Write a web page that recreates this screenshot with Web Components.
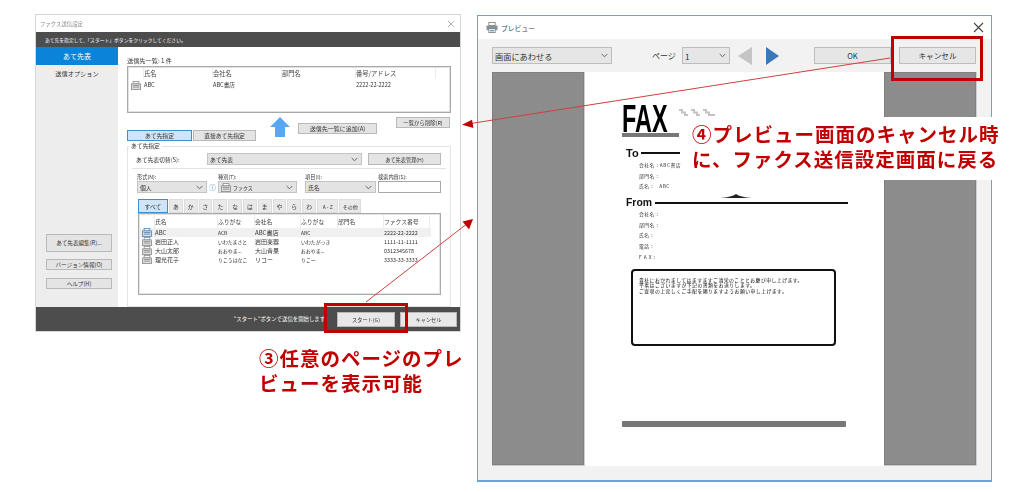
<!DOCTYPE html>
<html lang="ja"><head><meta charset="utf-8"><title>FAX</title>
<style>
html,body{margin:0;padding:0;background:#fff;width:1024px;height:492px;overflow:hidden;font-family:"Noto Sans CJK JP","Noto Sans",sans-serif}
</style></head><body>
<fax-window></fax-window>
<preview-window></preview-window>
<note-layer></note-layer>
<script>
const FF='"Noto Sans CJK JP","Noto Sans",sans-serif';
const faxIcon=(c='#8d8d8d')=>`<svg width="10" height="9" viewBox="0 0 12 11"><rect x="2.5" y="0.5" width="7" height="3" fill="#fff" stroke="${c}"/><rect x="0.5" y="3.5" width="11" height="7" fill="#ddd" stroke="${c}"/><path d="M2 5.5h8M2 7.5h8" stroke="${c}"/></svg>`;
function def(name,css,html,init){
  customElements.define(name,class extends HTMLElement{
    constructor(){super();const s=this.attachShadow({mode:'open'});
      s.innerHTML=`<style>${css}</style>`+(typeof html==='function'?html(this):html);}
    connectedCallback(){
      if(typeof html==='function'){const st=this.shadowRoot.querySelector('style').outerHTML;this.shadowRoot.innerHTML=st+html(this);}
      if(init)init(this);}
  });
}
def('win-btn',`:host{display:flex;align-items:center;justify-content:center;box-sizing:border-box;background:#e4e4e4;border:1px solid #b9b9b9;font-size:5.8px;color:#333;white-space:nowrap;overflow:hidden}
:host([active]){background:#cfe5f7;border-color:#3e8fd0}`,`<slot></slot>`);
def('win-select',`:host{display:flex;align-items:center;box-sizing:border-box;background:#e3e3e3;border:1px solid #c4c4c4;font-size:5.8px;color:#333;padding:0 3px 0 2px;white-space:nowrap;gap:2px}
.t{flex:1;display:flex;align-items:center;gap:2px}svg{flex:none}`,`<span class="t"><slot></slot></span><svg width="7" height="5" viewBox="0 0 7 5"><path d="M.7 1l2.8 2.8L6.3 1" fill="none" stroke="#666"/></svg>`);
def('head-cells',`:host{display:grid;font-size:6.3px;color:#444;background:#fff;align-items:center}
::slotted(span){border-right:1px solid #ececec;height:100%;display:flex;align-items:center;box-sizing:border-box;white-space:nowrap}`,`<slot></slot>`);
def('fax-icon',`:host{display:inline-flex;align-items:center}`,el=>faxIcon(el.getAttribute('color')||'#8d8d8d'));

def('fax-window',`
:host{position:absolute;left:36px;top:15px;width:424px;height:316px;box-sizing:border-box;background:#fff;display:flex;flex-direction:column;font-family:${FF};box-shadow:0 0 0 1px #d6d6d6;filter:blur(.35px);color:#333}
.title{height:17px;display:flex;align-items:center;justify-content:space-between;padding:0 5px 0 4px;font-size:5.4px;color:#8a8a8a}
.title svg{display:block}
.msg{height:15px;background:#4d4d4d;color:#fff;font-size:4.8px;display:flex;align-items:center;padding-left:9px;white-space:nowrap}
.body{flex:1;display:flex;min-height:0}
.side{width:82px;background:#ededed;display:flex;flex-direction:column;flex:none}
.tab{height:17px;display:flex;align-items:center;justify-content:center;font-size:6.2px}
.tab.on{height:18px;background:#0a84d8;color:#fff;font-size:7px}
.side .gap{flex:1}
.sbtns{display:flex;flex-direction:column;padding:0 6px 18px 10px}
.sbtns win-btn{height:11px;margin-bottom:8px;font-size:5.6px}
.sbtns win-btn:first-child{height:18px;margin-bottom:7px;font-size:5.6px}
.sbtns win-btn:last-child{margin-bottom:0}
.main{flex:1;padding:0 9px;min-width:0;display:flex;flex-direction:column}
.cap{height:19px;display:flex;align-items:flex-end;padding-bottom:1px;box-sizing:border-box;font-size:6.2px}
.sent{height:47px;box-sizing:border-box;border:1px solid #a9a9a9;box-shadow:inset 0 0 0 1px #e2e2e2;padding:1px}
.sent head-cells{height:11px;grid-template-columns:15px 69px 69px 74px 80px}
.sent .row{display:grid;grid-template-columns:15px 69px 69px 74px 80px;height:10px;font-size:5.6px;align-items:center;margin-top:1px}
.sent .row fax-icon{padding-left:2px}
.act{display:grid;grid-template-columns:65px 64px 20px 79px 54px;column-gap:0;height:28px}
.act>*{box-sizing:border-box}
.t1{margin-top:17px;height:11px}.t2{margin:17px 0 0 1px;height:11px}
.up{margin:4px 0 0 14px;width:20px;height:20px;grid-column:3}
.ab1{grid-column:4;margin:10px 0 7px 22px;width:79px;height:11px;font-size:6px}
.ab2{grid-column:5;margin:4px 0 0 41px;width:54px;height:11px;font-size:5.4px}
.group{margin:1px 0 0;padding:0;flex:1;border:1px solid #e3e3e3;min-width:0;position:relative}
legend{font-size:5.8px;padding:0 2px;margin-left:1px;line-height:8px}
.r1{display:flex;align-items:center;height:12px;margin:3px 0 0 8px}
.r1 label{width:71px;font-size:5.8px}
.r1 win-select{width:155px;height:12px}
.r1 win-btn{width:73px;height:12px;margin-left:6px;font-size:5.2px}
.hr{height:1px;background:#e3e3e3;margin:3px 4px 0 4px}
.r2{display:grid;grid-template-columns:70px 11px 79px 8px 71px 2px 63px;margin:2px 0 0 9px;grid-template-rows:10px 12px;font-size:5.2px}
.r2 span{align-self:center;white-space:nowrap}
.r2 win-select.k{font-size:5px}
.info{color:#3a8bd0;font-size:7px;align-self:center;justify-self:center}
.in{background:#fff;border:1px solid #a8a8a8;box-sizing:border-box}
.kana{display:flex;margin:6px 0 0 10px;height:14px;gap:1px}
.kana win-btn{width:13.8px;font-size:5.8px;background:#e9e9e9;border-color:#dcdcdc}
.kana win-btn[active]{width:30px;background:#cfe5f7;border-color:#3e8fd0}
.kana .w{width:21.5px;font-size:5px}
.list{margin:0 0 0 10px;width:303px;height:82px;box-sizing:border-box;border:1px solid #a9a9a9;box-shadow:inset 0 0 0 1px #e4e4e4;padding:1px 1px}
.list head-cells{height:13px;grid-template-columns:15px 63px 37px 46px 37px 46px 46px;font-size:5.8px}
.list .row{display:grid;grid-template-columns:15px 63px 37px 46px 37px 46px 46px;height:9px;font-size:6px;align-items:center;white-space:nowrap;overflow:hidden;width:291px}
.list .row span:nth-child(3),.list .row span:nth-child(5){font-size:4.9px}
.list .row span:nth-child(7){font-size:5.4px}
.row.sel{background:#f0f0f0}
.list .row fax-icon{padding-left:2px}
.foot{height:24px;background:#4d4d4d;display:flex;align-items:center;justify-content:flex-end;color:#fff;font-size:5.4px;padding-right:3px;white-space:nowrap}
.foot win-btn{height:15px;width:58px;margin-left:5px;background:#e8e8e8;font-size:5.2px}
.foot win-btn:last-child{width:57px}
.foot span{margin-right:2px}
`,`
<div class="title"><span>ファクス送信設定</span><svg width="8" height="8" viewBox="0 0 8 8"><path d="M1 1l6 6M7 1L1 7" stroke="#b5b5b5"/></svg></div>
<div class="msg">あて先を指定して、「スタート」ボタンをクリックしてください。</div>
<div class="body">
 <div class="side">
  <div class="tab on">あて先表</div><div class="tab">送信オプション</div><div class="gap"></div>
  <div class="sbtns"><win-btn>あて先表編集(R)...</win-btn><win-btn>バージョン情報(O)</win-btn><win-btn>ヘルプ(H)</win-btn></div>
 </div>
 <div class="main">
  <div class="cap">送信先一覧: 1 件</div>
  <div class="sent">
   <head-cells><span></span><span>氏名</span><span>会社名</span><span>部門名</span><span>番号/アドレス</span></head-cells>
   <div class="row"><fax-icon></fax-icon><span>ABC</span><span>ABC書店</span><span></span><span>2222-22-2222</span></div>
  </div>
  <div class="act">
   <win-btn class="t1" active>あて先指定</win-btn><win-btn class="t2">直接あて先指定</win-btn>
   <svg class="up" viewBox="0 0 20 20"><path d="M10 0L20 10H15V20H5V10H0Z" fill="#59a7f1"/></svg>
   <win-btn class="ab1">送信先一覧に追加(A)</win-btn><win-btn class="ab2">一覧から削除(R)</win-btn>
  </div>
  <fieldset class="group"><legend>あて先指定</legend>
   <div class="r1"><label>あて先表切替(S):</label><win-select>あて先表</win-select><win-btn>あて先表管理(H)</win-btn></div>
   <div class="hr"></div>
   <div class="r2">
    <span>形式(N):</span><i></i><span>種別(T):</span><i></i><span>項目(I):</span><i></i><span>検索内容(S):</span>
    <win-select>個人</win-select><span class="info">ⓘ</span><win-select class="k"><fax-icon></fax-icon>ファクス</win-select><i></i><win-select>氏名</win-select><i></i><div class="in"></div>
   </div>
   <div class="kana"><win-btn active>すべて</win-btn><win-btn>あ</win-btn><win-btn>か</win-btn><win-btn>さ</win-btn><win-btn>た</win-btn><win-btn>な</win-btn><win-btn>は</win-btn><win-btn>ま</win-btn><win-btn>や</win-btn><win-btn>ら</win-btn><win-btn>わ</win-btn><win-btn class="w">A - Z</win-btn><win-btn class="w">その他</win-btn></div>
   <div class="list">
    <head-cells><span></span><span>氏名</span><span>ふりがな</span><span>会社名</span><span>ふりがな</span><span>部門名</span><span>ファクス番号</span></head-cells>
    <div class="row sel"><fax-icon color="#5b84a8"></fax-icon><span>ABC</span><span>ACB</span><span>ABC書店</span><span>ABC</span><span></span><span>2222-22-2222</span></div>
    <div class="row"><fax-icon></fax-icon><span>岩田正人</span><span>いわたまさと</span><span>岩田楽器</span><span>いわたがっき</span><span></span><span>1111-11-1111</span></div>
    <div class="row"><fax-icon></fax-icon><span>大山太郎</span><span>おおやま...</span><span>大山青果</span><span>おおやま...</span><span></span><span>0312345678</span></div>
    <div class="row"><fax-icon></fax-icon><span>理光花子</span><span>りこうはなこ</span><span>リコー</span><span>りこー</span><span></span><span>3333-33-3333</span></div>
   </div>
  </fieldset>
 </div>
</div>
<div class="foot"><span>"スタート"ボタンで送信を開始します。</span><win-btn>スタート(G)</win-btn><win-btn>キャンセル</win-btn></div>
`);

def('fax-sheet',`
:host{display:block;width:299px;background:#fff;box-sizing:border-box;padding:33px 37px 0;color:#111;font-family:${FF};filter:blur(.25px)}
.top{display:flex;height:28px;align-items:flex-start}
.fax{font:bold 39px/28px "Liberation Sans",sans-serif;transform:scaleX(.6);transform-origin:0 50%;width:56px;color:#000;letter-spacing:0}
.bar{width:57px;height:4px;background:#777}
.hd{display:flex;align-items:center;font:bold 11px/12px "Liberation Sans",sans-serif;margin-left:4px;color:#111}
.hd i{height:2px;background:#111;flex:none;margin-left:2px}
.to{margin-top:10px}.to i{width:39px}
.from{margin-top:6px;position:relative;font-size:10.4px}.from i{width:193px;margin-left:3px}
.rows{margin-left:17px;font-size:4.8px;letter-spacing:.5px;color:#333}
.rows div{height:10.7px;display:flex;align-items:center;white-space:pre}
.box{box-sizing:border-box;margin:7px 0 0 9px;width:205px;height:77px;border:2px solid #111;border-radius:4px;padding:6px 6px;font-size:4.9px;line-height:5.5px;letter-spacing:.42px;color:#111;white-space:nowrap}
.foot{width:224px;height:6px;background:#777;margin-top:75px;border-radius:1px}
.bump{position:absolute;left:94px;top:-3px}
`,`
<div class="top"><span class="fax">FAX</span><svg width="38" height="11" viewBox="0 0 38 11" style="margin-top:3px"><g fill="none" stroke="#c4c4c4" stroke-width="2"><path d="M1 2h3v2.500h3V7h3"/><path d="M13 2h3v2.500h3V7h3"/><path d="M25 2h3v2.500h3V7h6"/></g></svg></div>
<div class="bar"></div>
<div class="hd to">To<i></i></div>
<div class="rows"><div>会社名 : ABC書店</div><div>部門名 :</div><div>氏名 :    ABC</div></div>
<div class="hd from">From<i></i><svg class="bump" width="32" height="4" viewBox="0 0 32 4"><path d="M0 4Q12 3 16 0Q20 3 32 4Z" fill="#222"/></svg></div>
<div class="rows" style="margin-top:-1px"><div>会社名 :</div><div>部門名 :</div><div>氏名 :</div><div>電話 :</div><div>F A X :</div></div>
<div class="box">貴社におかれましてはますますご清栄のこととお慶び申し上げます。<br>平素はございますが下記の書類をお送りします。<br>ご査収の上宜しくご手配を賜りますようお願い申し上げます。</div>
<div class="foot"></div>
`);

def('preview-window',`
:host{position:absolute;left:477px;top:15px;width:515px;height:467px;box-sizing:border-box;border:1px solid #64a5de;border-width:1px 1px 2px 1px;background:#f2f2f2;display:flex;flex-direction:column;font-family:${FF};color:#333}
.title{height:23px;flex:none;background:#fff;display:flex;align-items:center;padding:0 7px 0 8px;font-size:6.8px;gap:3px;color:#444}
.title .sp{flex:1}
.tool{height:33px;flex:none;display:flex;align-items:center;padding:0 14px;font-size:8px}
.tool win-select{height:17px;font-size:8.2px;box-sizing:border-box;background:#e6e6e6;border-color:#bdbdbd}
.tool win-btn{height:17px;width:77px;font-size:7.6px;background:#e6e6e6;border-color:#bdbdbd}
.pg{margin:0 6px 0 40px;width:24px;white-space:nowrap}
.wrap{flex:none;height:394px;display:flex;margin:0 14px}
.gray{flex:1;background:#8c8c8c;border-right:1px solid #cfcfcf;border-bottom:1px solid #c9c9c9;box-shadow:inset 0 0 0 1px #808080}
.tri{display:block}
`,`
<div class="title"><svg width="12" height="11" viewBox="0 0 15 14"><rect x="3.5" y=".5" width="8" height="4" fill="#fff" stroke="#777"/><rect x=".5" y="4.500" width="14" height="6" rx="1" fill="#8c9196"/><rect x="3.5" y="8.500" width="8" height="5" fill="#fff" stroke="#777"/><rect x="5" y="10" width="5" height="2" fill="#5aa7d8"/></svg><span>プレビュー</span><span class="sp"></span><svg width="11" height="11" viewBox="0 0 11 11"><path d="M1 1l9 9M10 1l-9 9" stroke="#444" stroke-width="1.1"/></svg></div>
<div class="tool">
 <win-select style="width:120px">画面にあわせる</win-select>
 <span class="pg">ページ</span>
 <win-select style="width:48px">1</win-select>
 <svg class="tri" style="margin-left:8px" width="14" height="18" viewBox="0 0 14 18"><path d="M14 0V18L0 9Z" fill="#c4c4c4"/></svg>
 <svg class="tri" style="margin-left:14px" width="13" height="18" viewBox="0 0 13 18"><path d="M0 0V18L13 9Z" fill="#3a78b8"/></svg>
 <win-btn style="margin-left:35px">OK</win-btn>
 <win-btn style="margin-left:8px">キャンセル</win-btn>
</div>
<div class="wrap"><div class="gray"></div><fax-sheet></fax-sheet><div class="gray"></div></div>
`);

def('note-layer',`
:host{position:absolute;left:0;top:0;width:1024px;height:492px;font-family:${FF};pointer-events:none}
.cover{position:absolute;left:688px;top:117px;width:336px;height:63px;background:#fff}
svg{position:absolute;left:0;top:0}
.note{position:absolute;color:#c00000;font-weight:700;font-size:19.5px;line-height:25px;letter-spacing:1px;white-space:nowrap}
.n3{left:259px;top:345px}.n4{left:692px;top:121px}
`,`
<div class="cover"></div>
<svg width="1024" height="492" viewBox="0 0 1024 492">
 <g fill="none" stroke="#c00000">
  <rect x="325.5" y="304.5" width="81" height="27" stroke-width="3"/>
  <rect x="892.5" y="37.5" width="89" height="42" stroke-width="3"/>
  <path d="M890 58L470 123.6" stroke-width="1" stroke="#d04040"/>
  <path d="M366 302L466 224.5" stroke-width="1" stroke="#d04040"/>
 </g>
 <path d="M462 124.8L472 119.7L473.5 128Z" fill="#c00000"/>
 <path d="M473 219L469 229.5L462.5 221.5Z" fill="#c00000"/>
</svg>
<div class="note n3">③任意のページのプレ<br>ビューを表示可能</div>
<div class="note n4">④プレビュー画面のキャンセル時<br>に、ファクス送信設定画面に戻る</div>
`);
</script>
</body></html>
